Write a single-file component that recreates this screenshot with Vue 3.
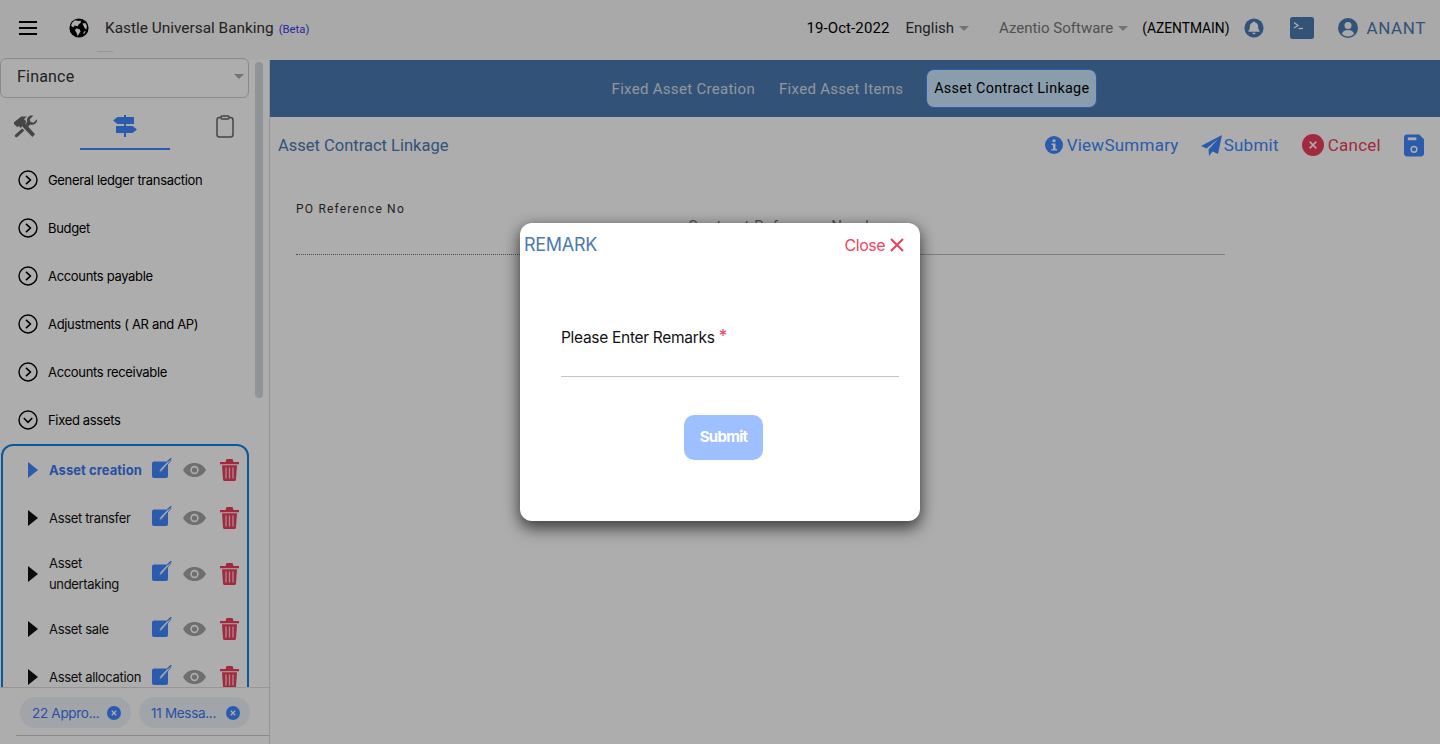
<template>
  <div class="page">
    <header class="topbar">
      <button class="burger"><span /><span /><span /></button>
      <svg class="globe" viewBox="0 0 20 20">
        <circle cx="10" cy="10" r="9.600" fill="#000" />
        <path d="M6 2.200 9.500 3 11.500 2.400 12 4.600 9.800 6.200 8.600 8.200 5.600 7.400 4.200 9.600 2 7.500 3.400 4.400ZM7 10.400 10.400 11 11.600 13.200 10 16 8.600 18 7.400 14.600 6 12.400ZM13.400 5.600 16.400 5 18 8 17.400 11.400 15.600 10 14.600 8ZM15 13.400 16.600 13 15.600 15.600 14.200 15.800Z" fill="#fff" />
      </svg>
      <span class="product">Kastle Universal Banking</span>
      <span class="beta">(Beta)</span>
      <i class="stub" />
      <div class="spacer" />
      <span class="date">19-Oct-2022</span>
      <span class="lang">English</span><i class="caret head-caret" />
      <span class="company">Azentio Software</span><i class="caret head-caret" />
      <span class="code">(AZENTMAIN)</span>
      <svg class="bell" viewBox="0 0 20 20">
        <circle cx="10" cy="10" r="9.600" fill="#4c7ab0" />
        <path d="M10 3.600c.7 0 1.100.5 1.100 1 2 .5 3 2 3 4 0 2.400.7 3.300 1.500 4.300v.8h-11.200v-.8c.8-1 1.500-1.900 1.500-4.300 0-2 1-3.500 3-4 0-.5.400-1 1.100-1ZM8.400 14.800h3.200c0 .9-.7 1.500-1.600 1.500s-1.600-.6-1.600-1.500Z" fill="#fff" />
      </svg>
      <svg class="terminal" viewBox="0 0 24 22">
        <rect width="24" height="22" rx="2.500" fill="#4c7ab0" />
        <path d="M4 5.500 8 8.500 4 11" fill="none" stroke="#fff" stroke-width="1.300" />
        <path d="M8.500 11.500h4.500" stroke="#fff" stroke-width="1.300" />
      </svg>
      <svg class="user" viewBox="0 0 20 20">
        <circle cx="10" cy="10" r="10" fill="#4c7ab0" />
        <circle cx="10" cy="7.600" r="3.500" fill="#f9f9fa" />
        <path d="M3.800 15.600c1.200-2.500 3.400-3.500 6.200-3.500s5 1 6.200 3.500c-1.500 1.800-3.700 2.900-6.200 2.900s-4.700-1.100-6.200-2.900Z" fill="#f9f9fa" />
      </svg>
      <span class="username">ANANT</span>
    </header>

    <div class="body">
      <aside class="sidebar">
        <div class="side-scroll">
          <div class="select">
            <span>Finance</span>
            <i class="caret" />
          </div>

          <div class="side-tabs">
            <div class="side-tab">
              <svg width="25" height="23" viewBox="0 0 26 24">
                <path d="M1 7.500 8.500 1.500h6L11.500 4.200 14 7 12.500 8.500 23 20 20.200 23 9.500 11.800 8 13.500 6 11.500 4.500 12.800 1 9.500Z" fill="#666" />
                <path d="M25 4.500 21.300 8l-3-.7L17.500 4.500 21 .8c-3.200-.9-6.500 1.400-6.500 4.500 0 .7.100 1.300.4 1.900l-2 2 3 3 2.200-2.200c3.500 1.200 7.500-1.700 6.900-5.500ZM9.500 14 2.500 20.300c-.9.900-.9 1.900-.2 2.500.7.600 1.600.6 2.400-.2L11.800 16.300Z" fill="#666" />
              </svg>
            </div>
            <div class="side-tab active">
              <svg width="24" height="22" viewBox="0 0 24 22">
                <path d="M11 0h2v22h-2z" fill="#3e86ff" />
                <path d="M4.500 2H21v7H4.500L0 5.500ZM3 11h16.500L24 14.500 19.500 18H3Z" fill="#3e86ff" />
              </svg>
            </div>
            <div class="side-tab clip">
              <svg width="18" height="23" viewBox="0 0 18 23" fill="none" stroke="#666" stroke-width="1.500">
                <rect x="1" y="2.500" width="16" height="19.500" rx="2.500" />
                <rect x="5" y="1" width="8" height="3" rx="1" fill="#fff" />
              </svg>
            </div>
          </div>

          <div v-for="item in groups" :key="item.label" class="group-row">
            <svg width="20" height="20" viewBox="0 0 20 20" fill="none" stroke="#000" stroke-width="1.400">
              <circle cx="10" cy="10" r="9" />
              <path :d="item.open ? 'M5.800 8 10 12.400 14.200 8' : 'M8 5.800 12.400 10 8 14.200'" stroke-width="1.600" />
            </svg>
            <span>{{ item.label }}</span>
          </div>

          <div class="sub-box">
            <div
              v-for="row in subItems"
              :key="row.label"
              class="sub-row"
              :class="{ current: row.current, tall: row.tall }"
            >
              <svg class="arrow" width="10" height="16" viewBox="0 0 10 16">
                <path d="M0 0 10 8 0 16Z" />
              </svg>
              <span class="sub-label">{{ row.label }}</span>
              <svg class="act-edit" width="20" height="21" viewBox="0 0 20 21">
                <rect y="3.500" width="16" height="16.500" rx="2" fill="#3e86ff" />
                <path d="M7 14.500 8 11 17.500 1.500 19 2.500 9.500 13.500Z" fill="#e4edff" stroke="#3e86ff" stroke-width=".8" />
                <path d="M15.500 3.500 19.500 0" stroke="#3e86ff" stroke-width="1.200" />
              </svg>
              <svg class="act-eye" width="23" height="16" viewBox="0 0 23 16">
                <path d="M0 8c2.500-4.600 6.500-7 11.500-7S20.500 3.400 23 8c-2.500 4.600-6.500 7-11.500 7S2.500 12.600 0 8Z" fill="#a4a4a6" />
                <circle cx="11.500" cy="8" r="4.200" fill="#fff" />
                <circle cx="11.500" cy="8" r="2.600" fill="#a4a4a6" />
              </svg>
              <svg class="act-trash" width="19" height="22" viewBox="0 0 19 22" fill="#ef3e5c">
                <path d="M0 3h19v2.200H0ZM6.500 0h6l1 3h-8ZM2 6.200h15L16 20.500c0 .8-.7 1.500-1.500 1.500h-10c-.8 0-1.500-.7-1.500-1.500Z" />
                <path d="M6 8.500v11M9.500 8.500v11M13 8.500v11" stroke="#fff" stroke-opacity=".75" stroke-width="1.300" />
              </svg>
            </div>
          </div>

          <div class="scroll-thumb" />
        </div>

        <div class="side-foot">
          <div class="chips">
            <div v-for="chip in chips" :key="chip" class="chip">
              <span>{{ chip }}</span>
              <svg width="14" height="14" viewBox="0 0 14 14">
                <circle cx="7" cy="7" r="7" fill="#3e86ff" />
                <path d="M4.800 4.800 9.200 9.200M9.200 4.800 4.800 9.200" stroke="#fff" stroke-width="1.300" />
              </svg>
            </div>
          </div>
          <div class="foot-line" />
        </div>
      </aside>

      <main class="content">
        <nav class="tabbar">
          <a v-for="tab in tabs" :key="tab.label" class="tab" :class="{ on: tab.on }">{{ tab.label }}</a>
        </nav>

        <div class="action-row">
          <span class="page-title">Asset Contract Linkage</span>
          <div class="actions">
            <span class="act act-view">
              <svg width="18" height="18" viewBox="0 0 18 18">
                <circle cx="9" cy="9" r="9" fill="#3e86ff" />
                <path d="M7.500 3.500h3v2.500h-3ZM6.500 7.500h4v5.500h1.500v1.500H6.500V13H8V9H6.500Z" fill="#fff" />
              </svg>
              ViewSummary
            </span>
            <span class="act act-send">
              <svg width="21" height="21" viewBox="0 0 21 21">
                <path d="M21 0 17 19 11.500 16.500 8 21 7.500 14.500 17 4 5.500 13.500 0 11Z" fill="#3e86ff" />
              </svg>
              Submit
            </span>
            <span class="act act-cancel">
              <svg width="22" height="22" viewBox="0 0 23 23">
                <circle cx="11.500" cy="11.500" r="11.500" fill="#ef3e5c" />
                <path d="M8 8 15 15M15 8 8 15" stroke="#fff" stroke-width="1.600" />
              </svg>
              Cancel
            </span>
            <svg class="save" width="20" height="23" viewBox="0 0 21 23">
              <path d="M3 0h13l5 5v15c0 1.700-1.300 3-3 3H3c-1.700 0-3-1.300-3-3V3c0-1.700 1.300-3 3-3Z" fill="#3e86ff" />
              <rect x="4" y="3" width="9" height="3" fill="#fff" />
              <circle cx="10.500" cy="15.500" r="3" fill="none" stroke="#fff" stroke-width="1.600" />
            </svg>
          </div>
        </div>

        <div class="form-row">
          <div class="field po">
            <label>PO Reference No</label>
          </div>
          <div class="field contract">
            <label>Contract Reference Number</label>
          </div>
        </div>
      </main>
    </div>

    <div class="overlay">
      <div class="dialog">
        <div class="dialog-head">
          <span class="dialog-title">REMARK</span>
          <span class="dialog-close">
            Close
            <svg width="14" height="14" viewBox="0 0 14 14">
              <path d="M1 1 13 13M13 1 1 13" stroke="#ef3e5c" stroke-width="2" />
            </svg>
          </span>
        </div>
        <div class="remark-field">
          <label>Please Enter Remarks <b>*</b></label>
        </div>
        <div class="dialog-foot">
          <button class="submit-btn">Submit</button>
        </div>
      </div>
    </div>
  </div>
</template>

<script setup>
const groups = [
  { label: "General ledger transaction" },
  { label: "Budget" },
  { label: "Accounts payable" },
  { label: "Adjustments ( AR and AP)" },
  { label: "Accounts receivable" },
  { label: "Fixed assets", open: true },
];

const subItems = [
  { label: "Asset creation", current: true },
  { label: "Asset transfer" },
  { label: "Asset undertaking", tall: true },
  { label: "Asset sale" },
  { label: "Asset allocation" },
];

const chips = ["22 Appro...", "11 Messa..."];

const tabs = [
  { label: "Fixed Asset Creation" },
  { label: "Fixed Asset Items" },
  { label: "Asset Contract Linkage", on: true },
];
</script>

<style>
html,
body {
  margin: 0;
  background: #fff;
}
</style>

<style scoped>
.page {
  position: relative;
  width: 1440px;
  height: 744px;
  overflow: hidden;
  display: flex;
  flex-direction: column;
  font-family: Roboto, "Liberation Sans", sans-serif;
  background: #fff;
  color: #000;
}

.topbar {
  position: relative;
  height: 60px;
  flex: none;
  display: flex;
  align-items: center;
  padding: 0 14px 4px 19px;
  box-sizing: border-box;
  background: #f9f9fa;
  font-size: 15px;
}

.burger {
  width: 18px;
  padding: 0;
  border: 0;
  background: none;
  display: flex;
  flex-direction: column;
  gap: 4px;
}

.burger span {
  height: 2px;
  background: #000;
}

.globe {
  width: 20px;
  height: 20px;
  margin-left: 32px;
}

.product {
  margin-left: 16px;
  font-size: 15.4px;
  color: #333;
}

.beta {
  margin: 2px 0 0 5px;
  font-size: 11.3px;
  color: #3b3be8;
}

.stub {
  position: absolute;
  left: 97px;
  top: 51px;
  width: 16px;
  height: 1px;
  background: #ddd;
}

.spacer {
  flex: 1;
}

.date {
  letter-spacing: 0.1px;
}

.lang {
  margin-left: 16px;
  color: #333;
}

.head-caret {
  margin-left: 5px;
}

.company {
  margin-left: 30px;
  color: #777;
}

.code {
  margin-left: 14px;
  font-size: 13.8px;
}

.bell {
  width: 20px;
  height: 20px;
  margin-left: 14px;
}

.terminal {
  width: 24px;
  height: 22px;
  margin-left: 26px;
}

.user {
  width: 20px;
  height: 20px;
  margin-left: 24px;
}

.username {
  margin-left: 9px;
  font-size: 17px;
  letter-spacing: 0.6px;
  color: #4c7ab0;
}

.caret {
  display: block;
  width: 0;
  height: 0;
  border-left: 5px solid transparent;
  border-right: 5px solid transparent;
  border-top: 5px solid #aaa;
}

.body {
  flex: 1;
  min-height: 0;
  display: flex;
}

.sidebar {
  width: 270px;
  flex: none;
  box-sizing: border-box;
  border-right: 1px solid #ddd;
  display: flex;
  flex-direction: column;
}

.side-scroll {
  position: relative;
  flex: 1;
  min-height: 0;
  overflow: hidden;
  margin-top: -2px;
}

.scroll-thumb {
  position: absolute;
  left: 255px;
  top: 4px;
  width: 8px;
  height: 336px;
  border-radius: 4px;
  background: #d4dbe1;
}

.select {
  width: 249px;
  height: 40px;
  box-sizing: border-box;
  padding: 0 4px 4px 16px;
  display: flex;
  align-items: center;
  justify-content: space-between;
  border: 1px solid #ccc;
  border-radius: 6px;
  font-size: 16px;
  letter-spacing: 0.2px;
  color: #333;
}

.side-tabs {
  width: 249px;
  height: 52px;
  margin-bottom: 6px;
  display: grid;
  grid-template-columns: 80px 90px 79px;
}

.side-tab {
  display: flex;
  align-items: center;
  justify-content: center;
  padding-top: 6px;
  box-sizing: border-box;
  border-bottom: 2px solid transparent;
}

.side-tab:first-child {
  justify-content: flex-start;
  padding-left: 13px;
}

.side-tab.clip {
  padding-left: 31px;
}

.side-tab.active {
  border-bottom-color: #3e86ff;
}

.group-row {
  height: 48px;
  display: flex;
  align-items: center;
  gap: 10px;
  padding-left: 18px;
  font-family: Inter, Roboto, sans-serif;
  font-size: 13px;
  letter-spacing: -0.33px;
}

.sub-box {
  width: 248px;
  margin-left: 1px;
  box-sizing: border-box;
  border: 2px solid #1085e5;
  border-radius: 12px;
  padding-bottom: 40px;
}

.sub-row {
  height: 48px;
  display: flex;
  align-items: center;
  padding-left: 25px;
  font-family: Inter, Roboto, sans-serif;
  font-size: 13px;
  letter-spacing: -0.33px;
  color: #111;
}

.sub-row.tall {
  height: 63px;
}

.sub-row.current {
  color: #3e76f0;
  font-weight: 700;
  letter-spacing: 0.05px;
}

.arrow {
  flex: none;
  fill: #111;
}

.current .arrow {
  fill: #3e86ff;
}

.sub-label {
  width: 103px;
  flex: none;
  margin-left: 11px;
  line-height: 21px;
}

.act-edit {
  flex: none;
  margin-top: -4px;
}

.act-eye {
  flex: none;
  margin-left: 11px;
}

.act-trash {
  flex: none;
  margin-left: 14px;
}

.side-foot {
  height: 57px;
  flex: none;
  box-sizing: border-box;
  border-top: 1px solid #ddd;
  background: #fff;
  padding: 9px 0 0 16px;
}

.chips {
  display: flex;
  gap: 8px;
  padding-left: 4px;
}

.chip {
  width: 111px;
  height: 31px;
  box-sizing: border-box;
  padding: 0 10px 0 12px;
  display: flex;
  align-items: center;
  justify-content: space-between;
  border-radius: 16px;
  background: #eef3fb;
  color: #3e76f0;
  font-family: Inter, Roboto, sans-serif;
  font-size: 13.5px;
  letter-spacing: -0.3px;
}

.foot-line {
  margin-top: 7px;
  height: 1px;
  background: #ccc;
}

.content {
  flex: 1;
  min-width: 0;
  display: flex;
  flex-direction: column;
}

.tabbar {
  height: 57px;
  flex: none;
  display: flex;
  align-items: center;
  justify-content: center;
  gap: 16px;
  padding-right: 5px;
  background: #4c7ab0;
}

.tab {
  padding: 0 4px;
  font-size: 15px;
  letter-spacing: 0.3px;
  color: #d4dfeb;
}

.tab.on {
  height: 39px;
  box-sizing: border-box;
  margin-left: 3px;
  padding: 0 7px;
  line-height: 37px;
  border: 1px solid #3e86ff;
  border-radius: 8px;
  background: #cbe7ff;
  color: #000;
  font-size: 14.4px;
}

.action-row {
  height: 56px;
  flex: none;
  display: flex;
  align-items: center;
  justify-content: space-between;
  padding: 0 16px 0 8px;
}

.page-title {
  font-size: 16.5px;
  color: #4c7ab0;
}

.actions {
  display: flex;
  align-items: center;
}

.act {
  display: flex;
  align-items: center;
  font-size: 17px;
  letter-spacing: 0.25px;
  color: #3e86ff;
}

.act-view svg {
  margin-right: 4px;
}

.act-send {
  margin-left: 22px;
}

.act-send svg {
  margin-right: 2px;
}

.act-cancel {
  margin-left: 23px;
  color: #ef3e5c;
}

.act-cancel svg {
  margin-right: 4px;
}

.save {
  margin-left: 23px;
}

.form-row {
  display: flex;
  padding-left: 26px;
}

.field {
  box-sizing: border-box;
  height: 53px;
  margin-top: 29px;
  font-size: 12px;
  letter-spacing: 1.2px;
  color: #333;
}

.field.po {
  width: 392px;
  border-bottom: 1px dotted #777;
}

.field.contract {
  width: 537px;
  border-bottom: 1px solid #bbb;
  padding-top: 15px;
  font-size: 15px;
  letter-spacing: 0.6px;
  color: #777;
}

.overlay {
  position: absolute;
  inset: 0;
  display: flex;
  align-items: center;
  justify-content: center;
  background: rgba(0, 0, 0, 0.32);
}

.dialog {
  width: 400px;
  height: 298px;
  box-sizing: border-box;
  border-radius: 12px;
  background: #fff;
  box-shadow: 0 8px 16px rgba(0, 0, 0, 0.5), 0 2px 14px rgba(0, 0, 0, 0.3);
  display: flex;
  flex-direction: column;
}

.dialog-head {
  display: flex;
  align-items: center;
  justify-content: space-between;
  padding: 11px 16px 0 4px;
}

.dialog-title {
  font-family: Inter, Roboto, sans-serif;
  font-size: 18px;
  letter-spacing: -0.3px;
  color: #4c7ab0;
}

.dialog-close {
  display: flex;
  align-items: center;
  gap: 5px;
  padding-top: 1px;
  font-family: Inter, Roboto, sans-serif;
  font-size: 16px;
  letter-spacing: -0.5px;
  color: #f0455f;
}

.remark-field {
  margin: 73px 21px 0 41px;
  height: 48px;
  border-bottom: 1px solid #c4c4c4;
  font-family: Inter, Roboto, sans-serif;
  font-size: 15.5px;
  letter-spacing: -0.3px;
  color: #111;
}

.remark-field b {
  font-weight: 400;
  font-size: 17px;
  line-height: 1;
  vertical-align: 1px;
  color: #ef3e5c;
}

.dialog-foot {
  margin-top: 38px;
  padding-left: 164px;
}

.submit-btn {
  width: 79px;
  height: 45px;
  padding: 0 0 2px;
  border: 0;
  border-radius: 10px;
  background: #9fc0ff;
  color: #fff;
  font-family: Inter, Roboto, sans-serif;
  font-size: 15px;
  font-weight: 700;
  letter-spacing: -0.7px;
}
</style>
